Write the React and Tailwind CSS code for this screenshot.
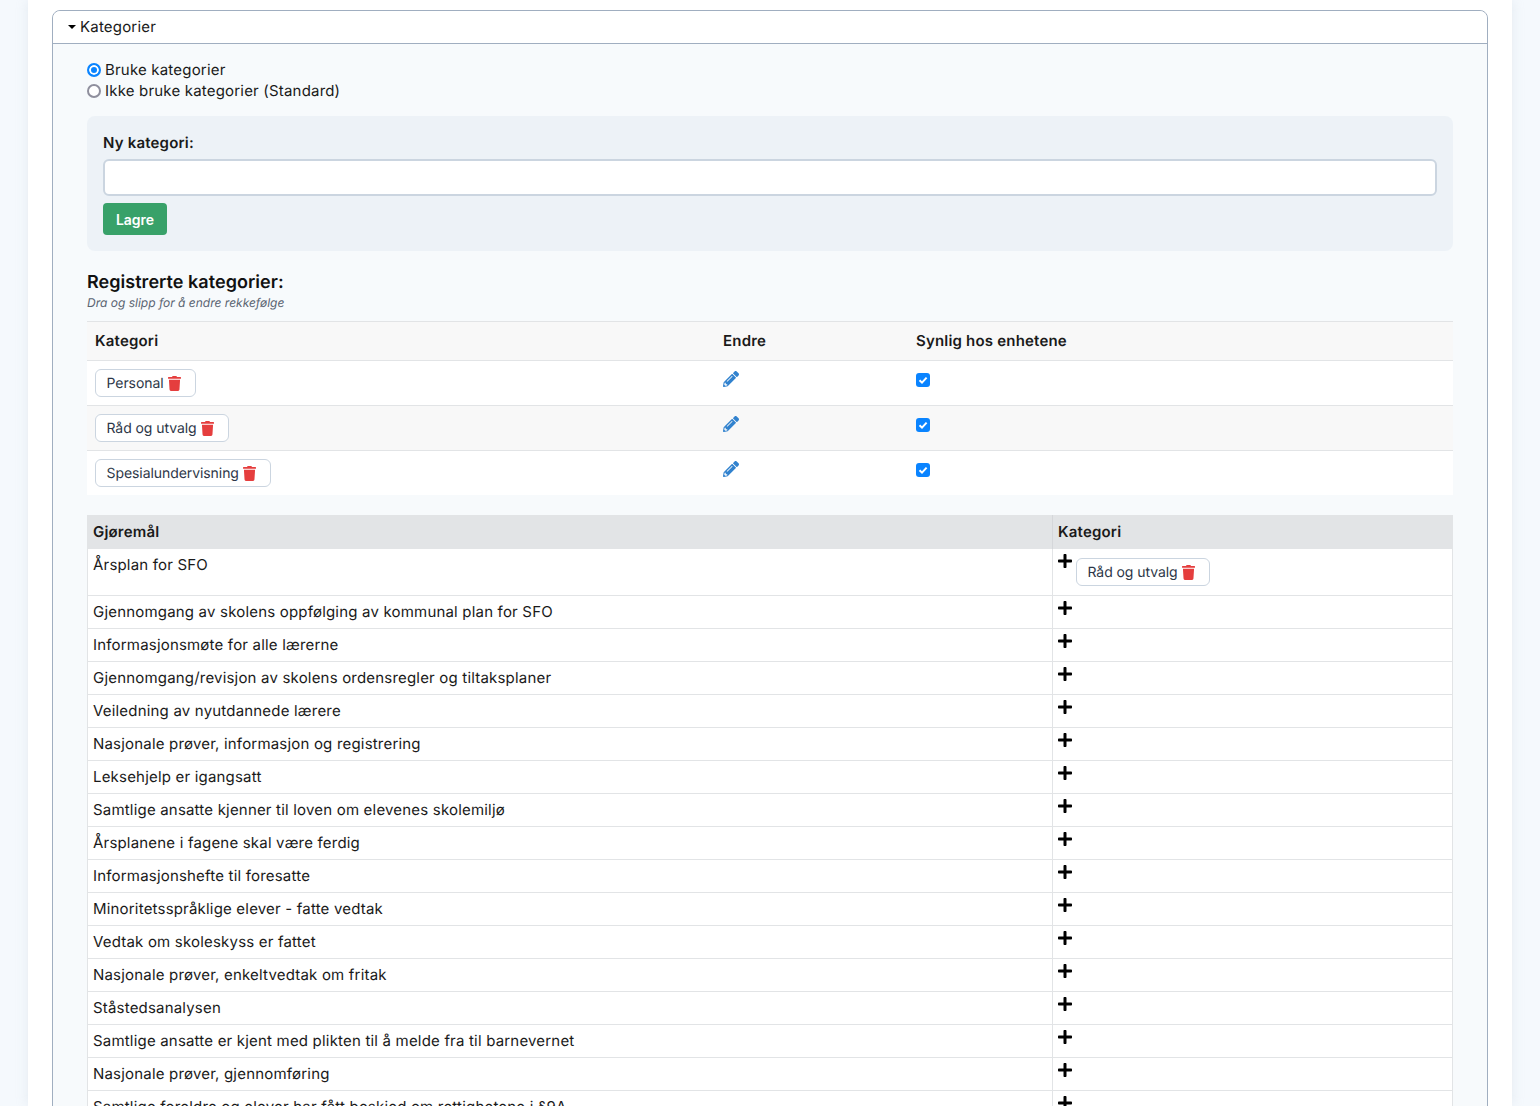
import { FaTrash, FaPencilAlt, FaPlus } from "react-icons/fa";

const categories = ["Personal", "Råd og utvalg", "Spesialundervisning"];

const tasks = [
  "Gjennomgang av skolens oppfølging av kommunal plan for SFO",
  "Informasjonsmøte for alle lærerne",
  "Gjennomgang/revisjon av skolens ordensregler og tiltaksplaner",
  "Veiledning av nyutdannede lærere",
  "Nasjonale prøver, informasjon og registrering",
  "Leksehjelp er igangsatt",
  "Samtlige ansatte kjenner til loven om elevenes skolemiljø",
  "Årsplanene i fagene skal være ferdig",
  "Informasjonshefte til foresatte",
  "Minoritetsspråklige elever - fatte vedtak",
  "Vedtak om skoleskyss er fattet",
  "Nasjonale prøver, enkeltvedtak om fritak",
  "Ståstedsanalysen",
  "Samtlige ansatte er kjent med plikten til å melde fra til barnevernet",
  "Nasjonale prøver, gjennomføring",
  "Samtlige foreldre og elever har fått beskjed om rettighetene i §9A",
];

function Tag({ label, className = "" }) {
  return (
    <span className={`inline-flex h-[28px] items-center gap-[4px] rounded-md border border-[#cbd5e0] bg-white pl-[10.5px] pr-[14.5px] text-[14px] tracking-[-0.07px] text-[#2d3748] ${className}`}>
      <span>{label}</span>
      <FaTrash className="h-[15px] w-[13px] text-[#e53e3e]" />
    </span>
  );
}

function Radio({ checked }) {
  return (
    <input
      type="radio"
      name="bruk"
      defaultChecked={checked}
      className="m-0 mb-[2px] h-[14px] w-[14px] appearance-none rounded-full border-2 border-[#8f8f9d] bg-white checked:border-[#0a84ff] checked:bg-[#0a84ff] checked:shadow-[inset_0_0_0_2px_white]"
    />
  );
}

function Check() {
  return (
    <span className="relative block h-[14px] w-[14px]">
      <input type="checkbox" defaultChecked className="m-0 block h-[14px] w-[14px] appearance-none rounded-[3px] bg-[#0a84ff]" />
      <svg viewBox="0 0 14 14" className="pointer-events-none absolute inset-0 h-[14px] w-[14px]">
        <path d="M3.5 7.2 6 9.6 10.6 4.6" fill="none" stroke="white" strokeWidth="2" />
      </svg>
    </span>
  );
}

function TaskRow({ name, tag }) {
  return (
    <tr className="border-t border-[#e2e4e6] align-top">
      <td className="h-[33px] border-r border-[#e2e4e6] px-[5px] pt-[5px] pb-[6px] leading-[21px]">{name}</td>
      <td className="px-[5px] pt-[4px]">
        <div className="flex items-start">
          <FaPlus className="-ml-px h-[16px] w-[16px] shrink-0 text-black" />
          {tag && <Tag label={tag} className="mt-[5px] ml-[3px] mb-[9px]" />}
        </div>
      </td>
    </tr>
  );
}

export default function App() {
  return (
    <div className="h-[1106px] overflow-hidden bg-[#f5f9fd] px-[28px] font-['Inter',sans-serif] text-[15px] tracking-[0.19px] text-[#1a1a1a] [text-rendering:geometricPrecision]">
      <div className="h-full bg-white px-[24px] pt-[10px] shadow-[0_0_12px_rgba(160,174,192,0.2)]">
        <div className="rounded-t-lg border border-[#a0aec0]">
          <div className="flex h-[33px] items-center gap-[4px] rounded-t-lg border-b border-[#a0aec0] bg-white pl-[15px]">
            <span className="h-0 w-0 border-x-[4px] border-t-[4px] border-x-transparent border-t-black" />
            <span>Kategorier</span>
          </div>

          <div className="bg-[#f7fafc] px-[34px] pt-[16px]">
            <label className="flex h-[21px] items-center gap-[4px]">
              <Radio checked />
              Bruke kategorier
            </label>
            <label className="flex h-[21px] items-center gap-[4px]">
              <Radio />
              Ikke bruke kategorier (Standard)
            </label>

            <div className="mt-[14px] h-[135px] rounded-lg bg-[#edf2f7] px-[16px] pt-[16px]">
              <div className="h-[21px] font-semibold leading-[21px]">Ny kategori:</div>
              <input type="text" className="mt-[6px] block h-[37px] w-full rounded-md border-2 border-[#cbd5e0] bg-white" />
              <button className="mt-[7px] h-[32px] w-[64px] rounded bg-[#38a169] text-[14px] font-semibold tracking-normal text-white">Lagre</button>
            </div>

            <h2 className="mt-[21px] text-[18px] font-semibold leading-[22px] tracking-[0.04px] text-[#111]">Registrerte kategorier:</h2>
            <p className="text-[12px] italic leading-[18px] tracking-normal text-[#5a6472]">Dra og slipp for å endre rekkefølge</p>

            <table className="mt-[9px] w-full table-fixed border-collapse bg-white">
              <colgroup>
                <col className="w-[628px]" />
                <col className="w-[193px]" />
                <col />
              </colgroup>
              <thead>
                <tr className="h-[39px] border-t border-[#e2e4e6] bg-[#f8f8f8] text-left font-semibold">
                  <th className="px-[8px] font-semibold">Kategori</th>
                  <th className="px-[8px] font-semibold">Endre</th>
                  <th className="px-[8px] font-semibold">Synlig hos enhetene</th>
                </tr>
              </thead>
              <tbody>
                {categories.map((c, i) => (
                  <tr key={c} className={`border-t border-[#e2e4e6] align-top ${i === 1 ? "bg-[#f8f8f8]" : "bg-white"} ${i === 2 ? "h-[44px]" : "h-[45px]"}`}>
                    <td className="px-[8px] pt-[8px]"><Tag label={c} /></td>
                    <td className="px-[8px] pt-[10px]"><FaPencilAlt className="h-[16px] w-[16px] text-[#3182ce]" /></td>
                    <td className="px-[8px] pt-[12px]"><Check /></td>
                  </tr>
                ))}
              </tbody>
            </table>

            <table className="mt-[20px] w-full table-fixed border-collapse border-x border-[#e2e4e6] bg-white">
              <colgroup>
                <col className="w-[965px]" />
                <col />
              </colgroup>
              <thead>
                <tr className="h-[34px] bg-[#e2e4e6] text-left">
                  <th className="border-r border-[#d5d7da] px-[5px] pt-px font-semibold">Gjøremål</th>
                  <th className="px-[5px] pt-px font-semibold">Kategori</th>
                </tr>
              </thead>
              <tbody>
                <TaskRow name="Årsplan for SFO" tag="Råd og utvalg" />
                {tasks.map((t) => (
                  <TaskRow key={t} name={t} />
                ))}
              </tbody>
            </table>
          </div>
        </div>
      </div>
    </div>
  );
}
